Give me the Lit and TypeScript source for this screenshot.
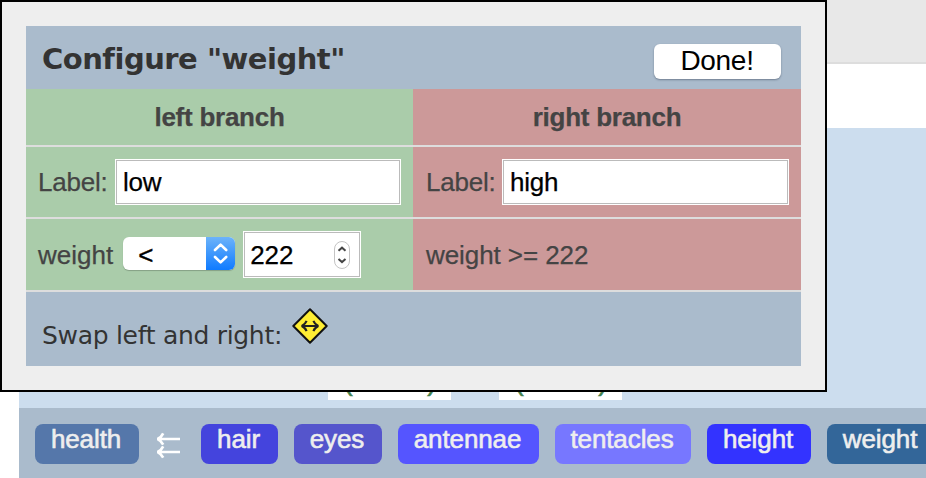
import { LitElement, html, css, svg } from "lit";
import { customElement, state } from "lit/decorators.js";
import { styleMap } from "lit/directives/style-map.js";

interface Attribute {
  name: string;
  color: string;
  width: number;
}

const ATTRIBUTES: Attribute[] = [
  { name: "hair", color: "#4444dd", width: 77 },
  { name: "eyes", color: "#5555cc", width: 88 },
  { name: "antennae", color: "#5555ff", width: 141 },
  { name: "tentacles", color: "#7777ff", width: 136 },
  { name: "height", color: "#3333ff", width: 104 },
  { name: "weight", color: "#336699", width: 108 },
];

/** A coloured pill naming one attribute of the data set. */
@customElement("attribute-chip")
class AttributeChip extends LitElement {
  static properties = { label: {}, color: {}, width: {} };
  declare label: string;
  declare color: string;
  declare width: number;

  static styles = css`
    :host { display: block; flex: none; }
    .chip {
      height: 40px;
      box-sizing: border-box;
      padding-right: 2px;
      border-radius: 8px;
      color: #eee;
      line-height: 31px;
      text-align: center;
      white-space: nowrap;
      letter-spacing: -0.1px;
      -webkit-text-stroke: 0.6px #eee;
    }
  `;

  render() {
    return html`<div class="chip" style=${styleMap({ background: this.color, width: `${this.width}px` })}>${this.label}</div>`;
  }
}

/** The dialog that sets how a node splits its cases. */
@customElement("branch-dialog")
class BranchDialog extends LitElement {
  @state() private attribute = "weight";
  @state() private cut = "222";

  static styles = css`
    :host {
      display: block;
      box-sizing: border-box;
      width: 827px;
      height: 392px;
      padding: 24px;
      border: 2px solid #000;
      background: #eee;
      color: #444;
      line-height: 30px;
    }
    .panel { display: flex; flex-direction: column; width: 775px; height: 340px; background: #aabbcc; }
    .head {
      display: flex;
      justify-content: space-between;
      height: 63px;
      box-sizing: border-box;
      padding: 18px 20px 0 16px;
    }
    .title {
      margin: 0;
      font: bold 29px/30px "DejaVu Sans", sans-serif;
      letter-spacing: -0.5px;
      color: #333;
    }
    .done {
      width: 127px;
      height: 35px;
      padding: 0 1px 2px 0;
      border: 0;
      border-radius: 6px;
      background: #fff;
      box-shadow: 0 1px 2px rgba(40, 50, 70, 0.45);
      font: 28px/33px "Liberation Sans", Arial, sans-serif;
      letter-spacing: -0.3px;
      color: #000;
    }
    .grid {
      display: grid;
      grid-template-columns: 387px 388px;
      grid-template-rows: 58px 72px 73px;
    }
    .cell {
      display: flex;
      align-items: center;
      box-sizing: border-box;
      padding: 0 12px;
      border-bottom: 2px solid #ddd;
      white-space: nowrap;
      -webkit-text-stroke: 0.25px;
    }
    .left { background: #aaccaa; }
    .right { background: #cc9999; padding-left: 13px; }
    .name { justify-content: center; font-weight: bold; letter-spacing: -0.25px; padding: 0; }
    .caption { width: 71px; letter-spacing: -0.2px; }
    .right .caption { width: 70px; }
    .term { padding-top: 1px; }
    .right .term { letter-spacing: -0.08px; }
    .field {
      flex: 1;
      display: flex;
      align-items: center;
      height: 46px;
      box-sizing: border-box;
      margin-left: 6px;
      padding: 0 7px;
      border: 1px solid #fff;
      box-shadow: inset 0 0 0 1px #bbb;
      background: #fff;
      color: #000;
      letter-spacing: -0.2px;
    }
    .number { flex: none; width: 118px; height: 47px; margin-left: 8px; padding: 0 9px 0 6px; justify-content: space-between; letter-spacing: 0; }
    .stepper, .picker, .sign { display: block; flex: none; }
    .select {
      display: flex;
      width: 112px;
      height: 33px;
      margin: 0 0 3px 10px;
      border-radius: 6px;
      overflow: hidden;
      background: #fff;
      box-shadow: 0 1px 1px rgba(0, 0, 0, 0.22);
      color: #000;
      line-height: 36px;
      -webkit-text-stroke: 0.4px #000;
    }
    .operator { width: 68px; padding-left: 15px; }
    .picker { background: linear-gradient(#6cb3fa, #0f7bff); }
    .foot {
      display: flex;
      align-items: flex-start;
      padding: 16px 16px 0;
      font: 25px/30px "DejaVu Sans", sans-serif;
      letter-spacing: -0.3px;
      color: #333;
    }
    .prompt { width: 241px; padding-top: 13px; white-space: nowrap; }
    .sign { margin-left: 9px; }
  `;

  render() {
    return html`
      <div class="panel">
        <div class="head">
          <h2 class="title">Configure "${this.attribute}"</h2>
          <button class="done">Done!</button>
        </div>
        <div class="grid">
          <div class="cell left name">left branch</div>
          <div class="cell right name">right branch</div>
          <div class="cell left"><span class="caption">Label:</span><div class="field">low</div></div>
          <div class="cell right"><span class="caption">Label:</span><div class="field">high</div></div>
          <div class="cell left">
            <span class="term">${this.attribute}</span>
            <div class="select">
              <span class="operator">&lt;</span>
              <svg class="picker" width="29" height="33" viewBox="0 0 29 33" fill="none" stroke="#fff" stroke-width="2.6" stroke-linecap="round" stroke-linejoin="round">
                ${svg`<path d="M9 13L14.6 7.6L20.2 13M9 20L14.6 25.4L20.2 20" />`}
              </svg>
            </div>
            <div class="field number">
              <span>${this.cut}</span>
              <svg class="stepper" width="18" height="30" viewBox="0 0 18 30" fill="none">
                ${svg`<rect x="1.5" y="1.5" width="15" height="27" rx="7.5" fill="#fff" stroke="#c4c4c4" />
                <path d="M5.5 10.8L9 7.7L12.5 10.8M5.5 19L9 22.1L12.5 19" stroke="#444" stroke-width="2" />`}
              </svg>
            </div>
          </div>
          <div class="cell right"><span class="term">${this.attribute} &gt;= ${this.cut}</span></div>
        </div>
        <div class="foot">
          <span class="prompt">Swap left and right:</span>
          <svg class="sign" width="36" height="36" viewBox="0 0 36 36">
            <path d="M18 1.3L34.7 18L18 34.7L1.3 18Z" fill="#ffee33" stroke="#111" stroke-width="2" stroke-linejoin="round" />
            <path d="M10 18H26M14.6 12.8Q13.4 16 9.8 18Q13.4 20 14.6 23.2M21.4 12.8Q22.6 16 26.2 18Q22.6 20 21.4 23.2" fill="none" stroke="#222" stroke-width="2.1" stroke-linejoin="bevel" />
          </svg>
        </div>
      </div>
    `;
  }
}

@customElement("app-root")
class AppRoot extends LitElement {
  static styles = css`
    :host {
      display: block;
      position: relative;
      width: 926px;
      height: 478px;
      overflow: hidden;
      background: #fff;
      font: 26px/30px "Liberation Sans", Arial, sans-serif;
    }
    .toolbar { height: 62px; border-bottom: 2px solid #ddd; background: #e8e8e8; }
    .workspace { margin: 64px 0 0 19px; }
    .tree {
      display: flex;
      align-items: flex-end;
      gap: 48px;
      height: 280px;
      box-sizing: border-box;
      padding: 0 0 8px 309px;
      background: #ccddee;
    }
    .leaf {
      display: flex;
      justify-content: space-between;
      width: 123px;
      height: 34px;
      box-sizing: border-box;
      padding: 0 15px 0 16px;
      background: #fff;
      color: #3f7f4a;
      line-height: 33px;
      -webkit-text-stroke: 0.6px;
    }
    .tray {
      display: flex;
      gap: 16px;
      height: 70px;
      box-sizing: border-box;
      padding: 16px 0 0 16px;
      background: #aabbcc;
    }
    .arrows { flex: none; width: 30px; height: 40px; }
    .dialog { position: absolute; left: 0; top: 0; }
  `;

  render() {
    return html`
      <div class="toolbar"></div>
      <div class="workspace">
        <div class="tree">
          <div class="leaf"><span>(</span><span>)</span></div>
          <div class="leaf"><span>(</span><span>)</span></div>
        </div>
        <div class="tray">
          <attribute-chip .label=${"health"} .color=${"#5577aa"} .width=${104}></attribute-chip>
          <svg class="arrows" viewBox="0 0 30 40" fill="none" stroke="#fff" stroke-width="2.6" stroke-linejoin="bevel">
            <path d="M3 15H25M8.2 9.4Q6.6 13 2.6 15Q6.6 17 8.2 20.6" />
            <path d="M3 28H25M8.2 22.4Q6.6 26 2.6 28Q6.6 30 8.2 33.6" />
          </svg>
          ${ATTRIBUTES.map((a) => html`<attribute-chip .label=${a.name} .color=${a.color} .width=${a.width}></attribute-chip>`)}
        </div>
      </div>
      <branch-dialog class="dialog"></branch-dialog>
    `;
  }
}
